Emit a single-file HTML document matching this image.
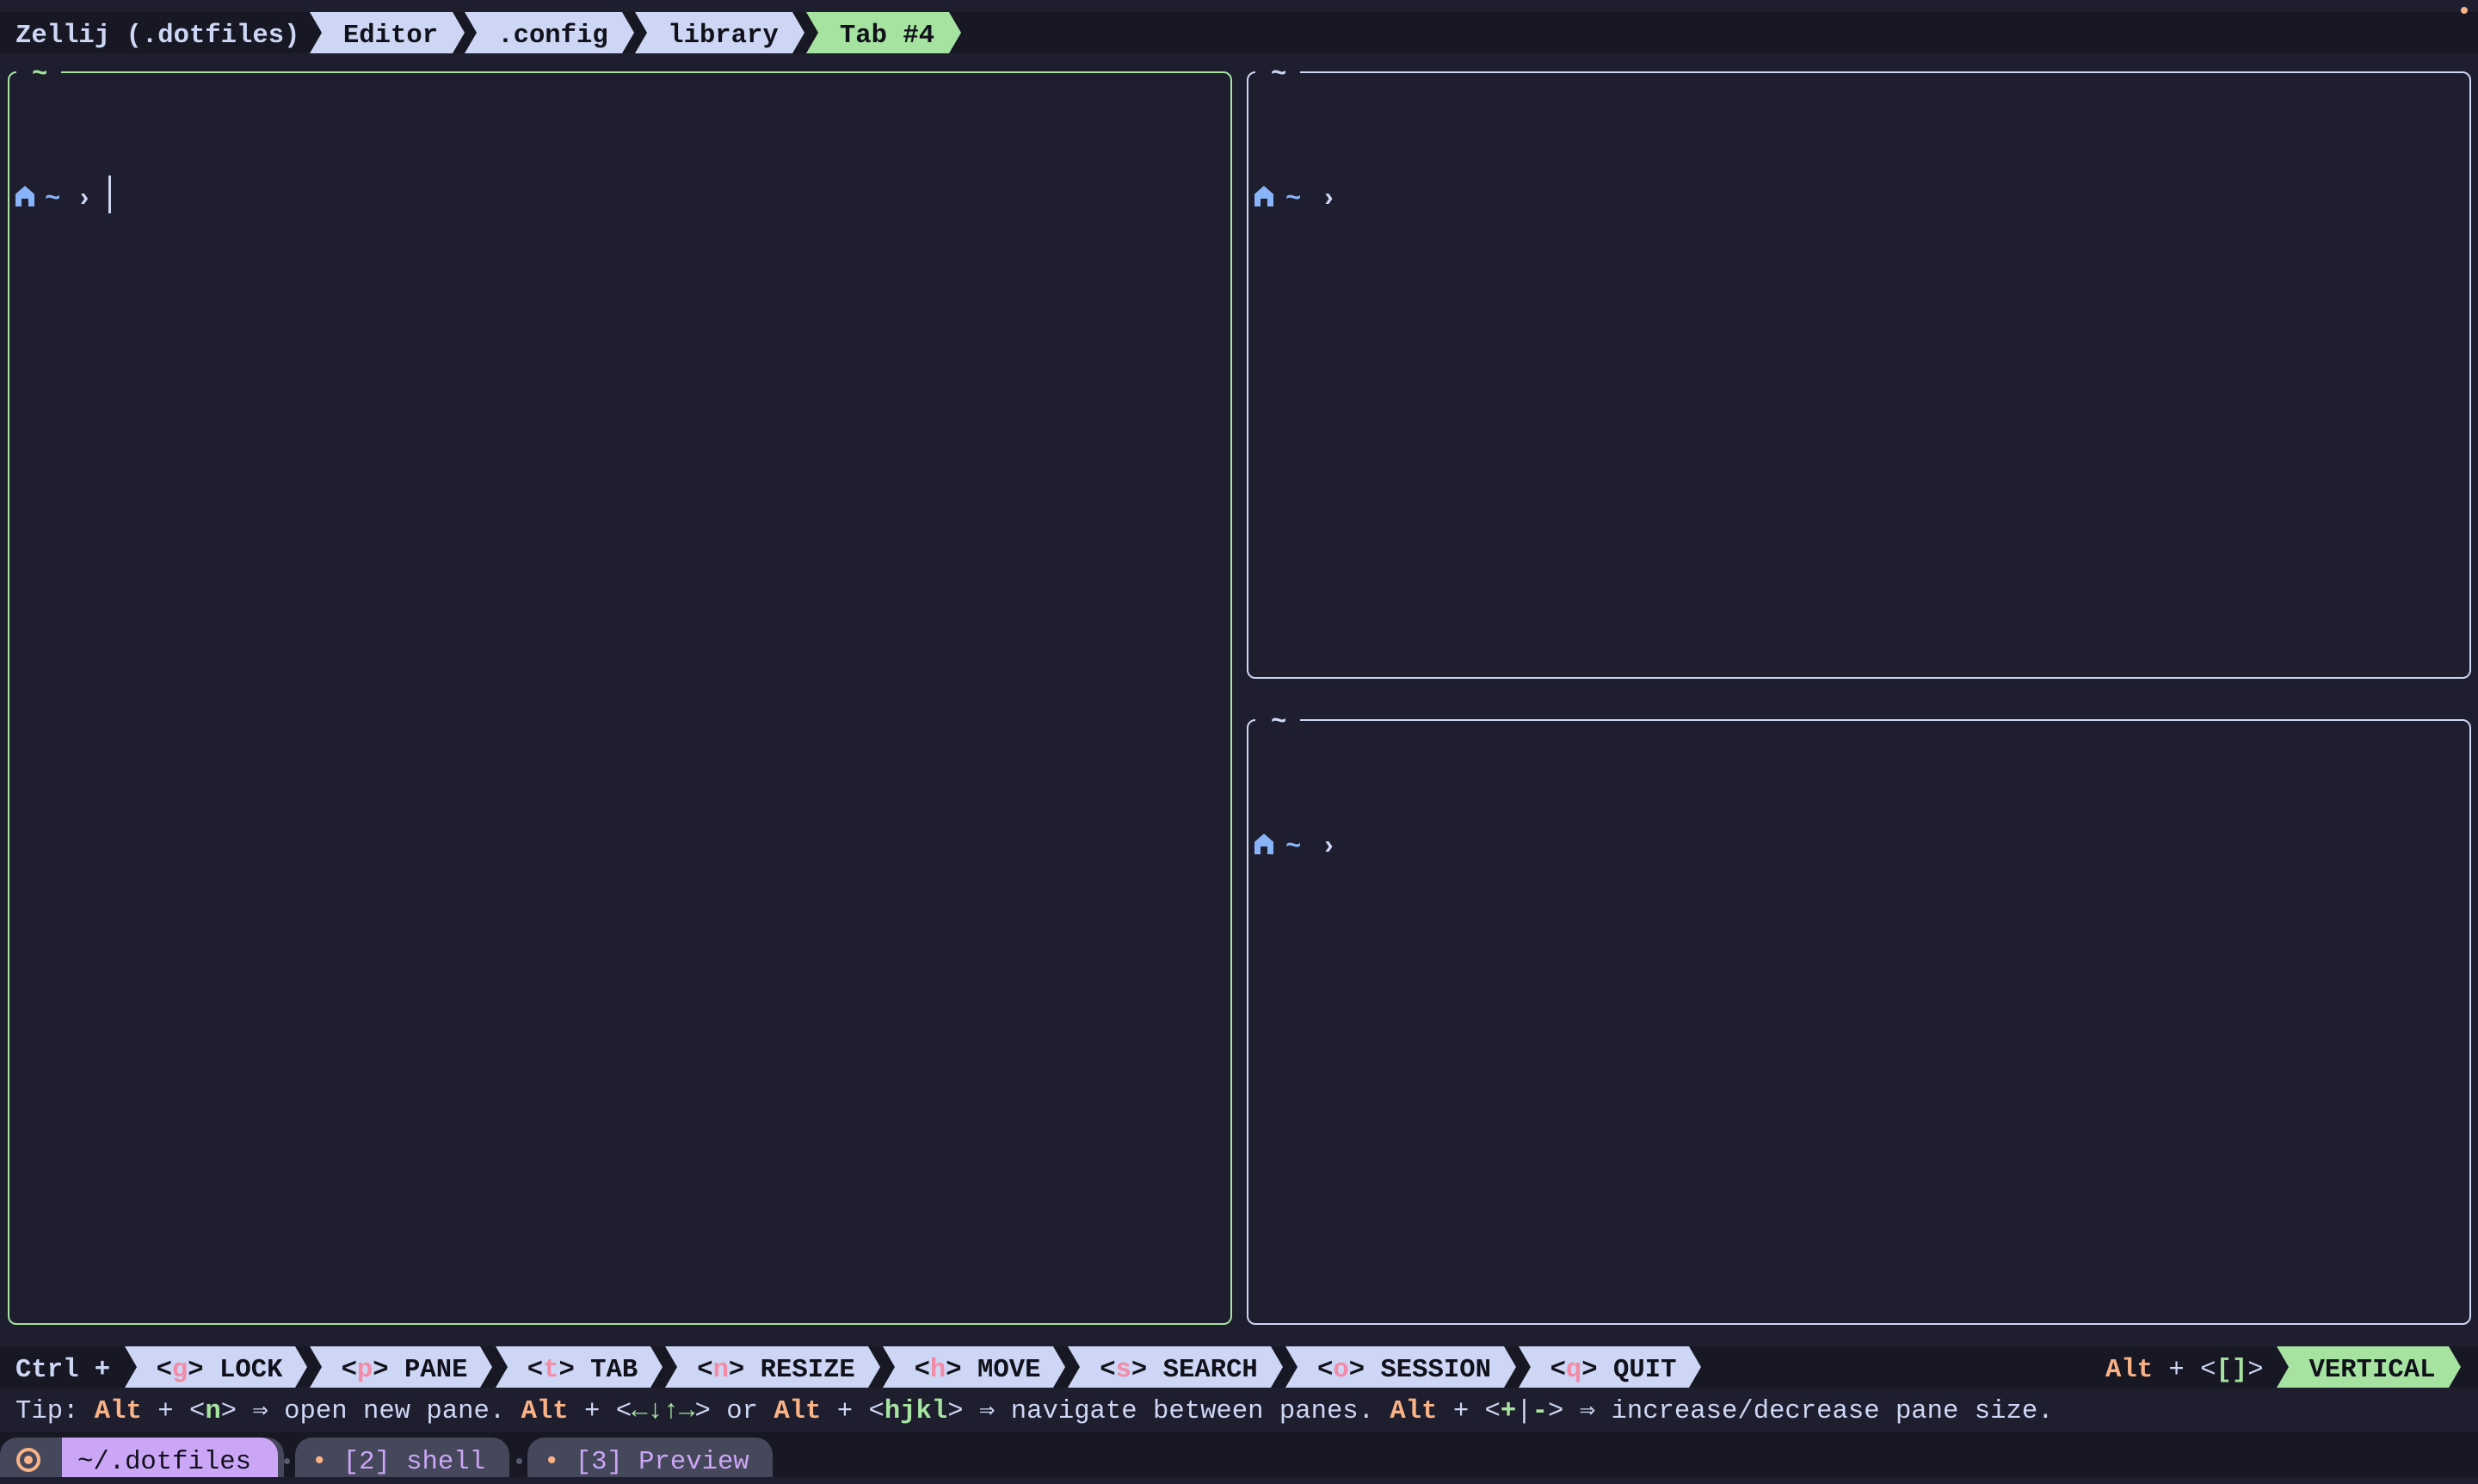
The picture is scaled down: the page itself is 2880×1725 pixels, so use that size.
<!DOCTYPE html>
<html><head><meta charset="utf-8"><style>
*{margin:0;padding:0;box-sizing:border-box}
body{width:2880px;height:1717px;background:#1e1e2e;overflow:hidden;position:relative;font-family:"Liberation Mono","DejaVu Sans Mono",monospace;font-size:30.6px;color:#cdd6f4}
.a{position:absolute;white-space:pre;line-height:48px;margin-top:4px}
.bar{position:absolute;left:0;width:2880px;background:#181825}
.seg{position:absolute;height:48px;background:#cdd6f4;color:#11111b;font-weight:bold;display:flex;align-items:center;justify-content:center;white-space:pre;clip-path:polygon(0 0,calc(100% - 14px) 0,100% 50%,calc(100% - 14px) 100%,0 100%,14px 50%);padding-left:8px;padding-top:7px}
.g{background:#a6e3a1}
.k{color:#f38ba8}
.pane{position:absolute;border:2px solid #cdd6f4;border-radius:10px}
.pane.act{border-color:#a6e3a1}
.ttl{position:absolute;top:-22px;left:8px;background:#1e1e2e;padding:0 16px 0 18px;line-height:48px;font-weight:bold;height:24px;overflow:visible}
.o{color:#fab387;font-weight:bold}.gr{color:#a6e3a1;font-weight:bold}
.home{position:absolute;width:22px;height:24px;background:#89b4fa;clip-path:polygon(50% 0,100% 40%,100% 100%,68% 100%,68% 62%,32% 62%,32% 100%,0 100%,0 40%)}
</style></head><body>
<div class="bar" style="top:14px;height:48px"></div>
<div style="position:absolute;right:12px;top:8px;width:8px;height:8px;border-radius:50%;background:#fab387"></div>
<div class="a" style="left:18px;top:14px;font-weight:bold">Zellij (.dotfiles)</div>
<div class="seg" style="left:360px;top:14px;width:180px">Editor</div>
<div class="seg" style="left:540px;top:14px;width:197px">.config</div>
<div class="seg" style="left:738px;top:14px;width:197px">library</div>
<div class="seg g" style="left:937px;top:14px;width:180px">Tab #4</div>

<div class="pane act" style="left:9px;top:83px;width:1423px;height:1457px"><div class="ttl" style="color:#a6e3a1">~</div></div>
<div class="pane" style="left:1449px;top:83px;width:1423px;height:706px"><div class="ttl">~</div></div>
<div class="pane" style="left:1449px;top:836px;width:1423px;height:704px"><div class="ttl">~</div></div>

<div class="home" style="left:18px;top:216px"></div>
<div class="a" style="left:52px;top:204px;color:#89b4fa;font-weight:bold">~ <span style="color:#cdd6f4">›</span></div>
<div style="position:absolute;left:126px;top:204px;width:3px;height:44px;background:#cdd6f4"></div>
<div class="home" style="left:1458px;top:216px"></div>
<div class="a" style="left:1494px;top:204px;color:#89b4fa;font-weight:bold">~  <span style="color:#cdd6f4;margin-left:-14px">›</span></div>
<div class="home" style="left:1458px;top:969px"></div>
<div class="a" style="left:1494px;top:957px;color:#89b4fa;font-weight:bold">~  <span style="color:#cdd6f4;margin-left:-14px">›</span></div>

<div class="bar" style="top:1565px;height:48px"></div>
<div class="a" style="left:18px;top:1565px;font-weight:bold">Ctrl +</div>
<div class="seg" style="left:145px;top:1565px;width:212px">&lt;<span class="k">g</span>&gt; LOCK</div>
<div class="seg" style="left:360px;top:1565px;width:212px">&lt;<span class="k">p</span>&gt; PANE</div>
<div class="seg" style="left:576px;top:1565px;width:194px">&lt;<span class="k">t</span>&gt; TAB</div>
<div class="seg" style="left:773px;top:1565px;width:250px">&lt;<span class="k">n</span>&gt; RESIZE</div>
<div class="seg" style="left:1026px;top:1565px;width:212px">&lt;<span class="k">h</span>&gt; MOVE</div>
<div class="seg" style="left:1241px;top:1565px;width:250px">&lt;<span class="k">s</span>&gt; SEARCH</div>
<div class="seg" style="left:1494px;top:1565px;width:268px">&lt;<span class="k">o</span>&gt; SESSION</div>
<div class="seg" style="left:1765px;top:1565px;width:212px">&lt;<span class="k">q</span>&gt; QUIT</div>
<div class="a" style="left:2447px;top:1565px"><span class="o">Alt</span> + &lt;<span class="gr">[]</span>&gt;</div>
<div class="seg g" style="left:2646px;top:1565px;width:214px">VERTICAL</div>

<div class="a" style="left:18px;top:1613px">Tip: <span class="o">Alt</span> + &lt;<span class="gr">n</span>&gt; ⇒ open new pane. <span class="o">Alt</span> + &lt;<span class="gr">←↓↑→</span>&gt; or <span class="o">Alt</span> + &lt;<span class="gr">hjkl</span>&gt; ⇒ navigate between panes. <span class="o">Alt</span> + &lt;<span class="gr">+</span>|<span class="gr">-</span>&gt; ⇒ increase/decrease pane size.</div>

<div class="bar" style="top:1664px;height:53px;background:#181825"></div>
<div style="position:absolute;left:0;top:1671px;width:330px;height:46px;background:#45475a;border-radius:20px 20px 0 0"></div>
<div style="position:absolute;left:72px;top:1671px;width:251px;height:46px;background:#cba6f7;border-radius:0 20px 0 0"></div>
<div style="position:absolute;left:19px;top:1683px;width:28px;height:28px;border-radius:50%;border:4px solid #fab387"></div>
<div style="position:absolute;left:28px;top:1692px;width:10px;height:10px;border-radius:50%;background:#fab387"></div>
<div class="a" style="left:90px;top:1671px;color:#11111b;line-height:50px">~/.dotfiles</div>
<div style="position:absolute;left:330px;top:1695px;width:7px;height:7px;border-radius:50%;background:#585b70"></div>
<div style="position:absolute;left:343px;top:1671px;width:249px;height:46px;background:#45475a;border-radius:20px 20px 0 0"></div>
<div class="a" style="left:362px;top:1671px;color:#cba6f7;line-height:50px"><span style="color:#fab387">•</span> [2] shell</div>
<div style="position:absolute;left:600px;top:1695px;width:7px;height:7px;border-radius:50%;background:#585b70"></div>
<div style="position:absolute;left:613px;top:1671px;width:285px;height:46px;background:#45475a;border-radius:20px 20px 0 0"></div>
<div class="a" style="left:632px;top:1671px;color:#cba6f7;line-height:50px"><span style="color:#fab387">•</span> [3] Preview</div>
</body></html>
